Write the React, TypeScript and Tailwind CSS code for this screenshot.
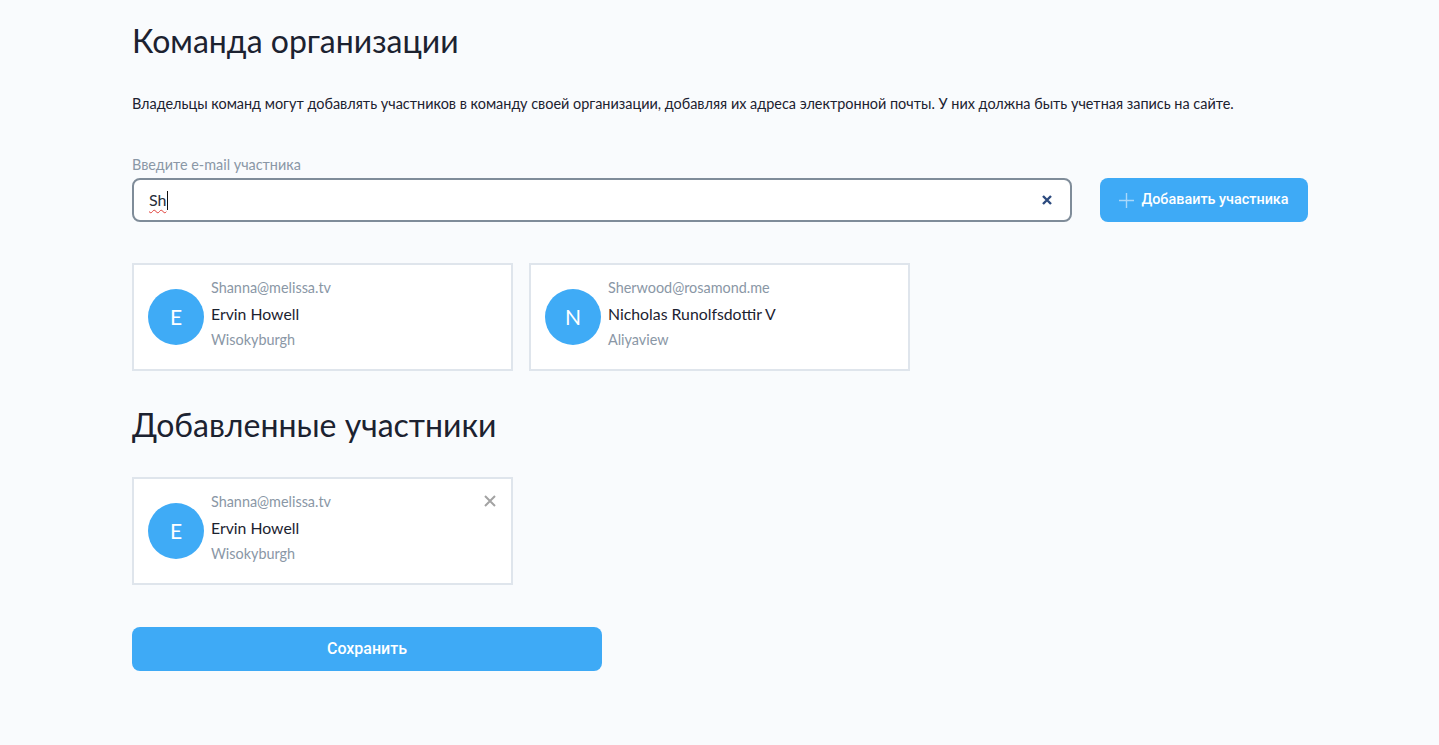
import React from "react";

interface Member {
  id: number;
  email: string;
  name: string;
  city: string;
}

const found: Member[] = [
  { id: 1, email: "Shanna@melissa.tv", name: "Ervin Howell", city: "Wisokyburgh" },
  { id: 2, email: "Sherwood@rosamond.me", name: "Nicholas Runolfsdottir V", city: "Aliyaview" },
];

const added: Member[] = [found[0]];

const MemberCard: React.FC<{ member: Member; removable?: boolean }> = ({ member, removable }) => (
  <div className="relative flex h-[108px] w-[381px] items-center gap-[7px] border-2 border-[#dfe5ec] bg-white px-[14px]">
    <div className="flex h-[56px] w-[56px] shrink-0 items-center justify-center rounded-full bg-[#3fabf6] text-[21px] text-white">
      {member.name[0]}
    </div>
    <div className="mb-[6px] flex flex-col leading-[26px]">
      <span className="text-[14.4px] text-[#8a97a6]">{member.email}</span>
      <span className="text-[15.8px] text-[#1c2230]">{member.name}</span>
      <span className="text-[14.4px] text-[#8a97a6]">{member.city}</span>
    </div>
    {removable && (
      <button className="absolute right-[15px] top-[16px] text-[#a3a3a3]">
        <svg width="12" height="12" viewBox="0 0 12 12" fill="none" stroke="currentColor" strokeWidth="2">
          <path d="M1 1l10 10M11 1L1 11" />
        </svg>
      </button>
    )}
  </div>
);

const App: React.FC = () => {
  return (
    <div className="min-h-[745px] bg-[#f9fbfd] pl-[132px] font-['Lato',sans-serif] text-[#1c2230]">
      {/* Title */}
      <h1 className="pt-[21px] text-[32px] leading-[40px]">Команда организации</h1>
      <p className="mt-[33px] text-[14.45px] leading-[20px]">
        Владельцы команд могут добавлять участников в команду своей организации, добавляя их адреса электронной почты. У них должна быть учетная запись на сайте.
      </p>

      {/* Email search */}
      <label className="mt-[41px] block text-[14.4px] leading-[20px] text-[#8a97a6]">Введите e-mail участника</label>
      <div className="mt-[3px] flex items-center gap-[28px]">
        <div className="flex h-[44px] w-[940px] items-center justify-between rounded-[8px] border-2 border-[#7f8c99] bg-white pl-[15px] pr-[18px]">
          <span className="flex items-center text-[16px] text-[#262d3a]">
            <span className="underline decoration-[#e0403a] decoration-wavy decoration-1 underline-offset-[3px]">Sh</span>
            <span className="ml-[1px] inline-block h-[19px] w-[1px] bg-[#111]" />
          </span>
          <button className="text-[#2c4a7e]">
            <svg width="10" height="10" viewBox="0 0 10 10" fill="none" stroke="currentColor" strokeWidth="2.4">
              <path d="M1 1l8 8M9 1L1 9" />
            </svg>
          </button>
        </div>
        <button className="flex h-[44px] w-[208px] items-center justify-center gap-[7px] rounded-[8px] bg-[#3eaaf6] font-['Roboto',sans-serif] text-[14.4px] font-medium text-white">
          <svg width="15" height="15" viewBox="0 0 15 15" fill="none" stroke="#a9d8fb" strokeWidth="1.4">
            <path d="M7.5 0v15M0 7.5h15" />
          </svg>
          Добаваить участника
        </button>
      </div>

      {/* Search results */}
      <div className="mt-[41px] flex gap-[16px]">
        {found.map((m) => (
          <MemberCard key={m.id} member={m} />
        ))}
      </div>

      {/* Added members */}
      <h2 className="mt-[34px] text-[32px] leading-[40px]">Добавленные участники</h2>
      <div className="mt-[32px] flex gap-[16px]">
        {added.map((m) => (
          <MemberCard key={m.id} member={m} removable />
        ))}
      </div>

      <button className="mt-[42px] flex h-[44px] w-[470px] items-center justify-center rounded-[8px] bg-[#3eaaf6] font-['Roboto',sans-serif] text-[16px] font-medium text-white">
        Сохранить
      </button>
    </div>
  );
};

export default App;
